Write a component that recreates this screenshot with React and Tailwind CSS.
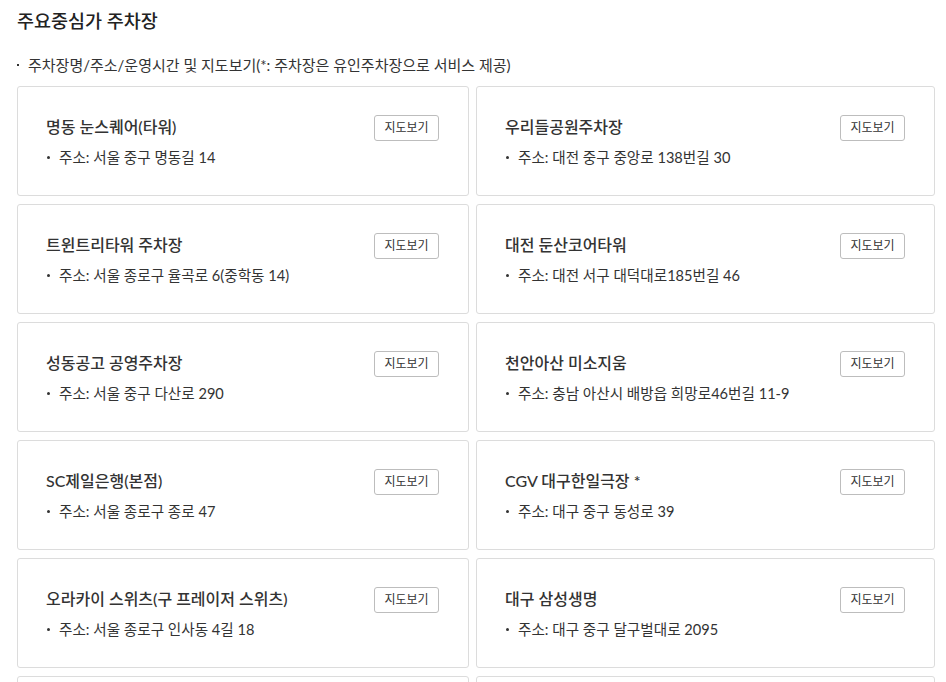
const items = [
  ["명동 눈스퀘어(타워)", "서울 중구 명동길 14"],
  ["우리들공원주차장", "대전 중구 중앙로 138번길 30"],
  ["트윈트리타워 주차장", "서울 종로구 율곡로 6(중학동 14)"],
  ["대전 둔산코어타워", "대전 서구 대덕대로185번길 46"],
  ["성동공고 공영주차장", "서울 중구 다산로 290"],
  ["천안아산 미소지움", "충남 아산시 배방읍 희망로46번길 11-9"],
  ["SC제일은행(본점)", "서울 종로구 종로 47"],
  ["CGV 대구한일극장 *", "대구 중구 동성로 39"],
  ["오라카이 스위츠(구 프레이저 스위츠)", "서울 종로구 인사동 4길 18"],
  ["대구 삼성생명", "대구 중구 달구벌대로 2095"],
  ["", ""],
  ["", ""],
];

function Card({ name, addr }) {
  return (
    <div className="h-[110px] border border-[#dcdcdc] rounded-[3px] bg-white px-7 flex flex-col justify-center">
      {name && (
        <>
          <div className="flex items-center justify-between h-[26px]">
            <span className="text-[16px] font-medium text-[#333] mt-[-2px]">{name}</span>
            <button className="h-[26px] w-[65px] mr-[1px] border border-[#bdbdbd] rounded-[3px] text-[12px] text-[#333] bg-white">
              지도보기
            </button>
          </div>
          <div className="mt-[7px] flex items-center text-[14.6px] text-[#333] h-5">
            <span className="w-[3px] h-[3px] bg-[#333] rounded-full mr-[9px] ml-[1px]"></span>
            <span>주소: {addr}</span>
          </div>
        </>
      )}
    </div>
  );
}

export default function App() {
  return (
    <div
      className="w-[946px] h-[682px] overflow-hidden bg-white pl-[17px] text-[#333]"
      style={{ fontFamily: 'Lato, "Noto Sans CJK KR", sans-serif' }}
    >
      <h1 className="pt-[8px] text-[18.5px] leading-[26px] font-medium text-[#222]">주요중심가 주차장</h1>
      <div className="mt-[21px] flex items-center text-[15px] leading-5 text-[#333]">
        <span className="w-[2px] h-[2px] bg-[#333] mr-[9px]"></span>
        <span>주차장명/주소/운영시간 및 지도보기(*: 주차장은 유인주차장으로 서비스 제공)</span>
      </div>
      <div className="mt-[11px] grid grid-cols-[452px_459px] gap-x-[7px] gap-y-2">
        {items.map(([n, a], i) => (
          <Card key={i} name={n} addr={a} />
        ))}
      </div>
    </div>
  );
}
